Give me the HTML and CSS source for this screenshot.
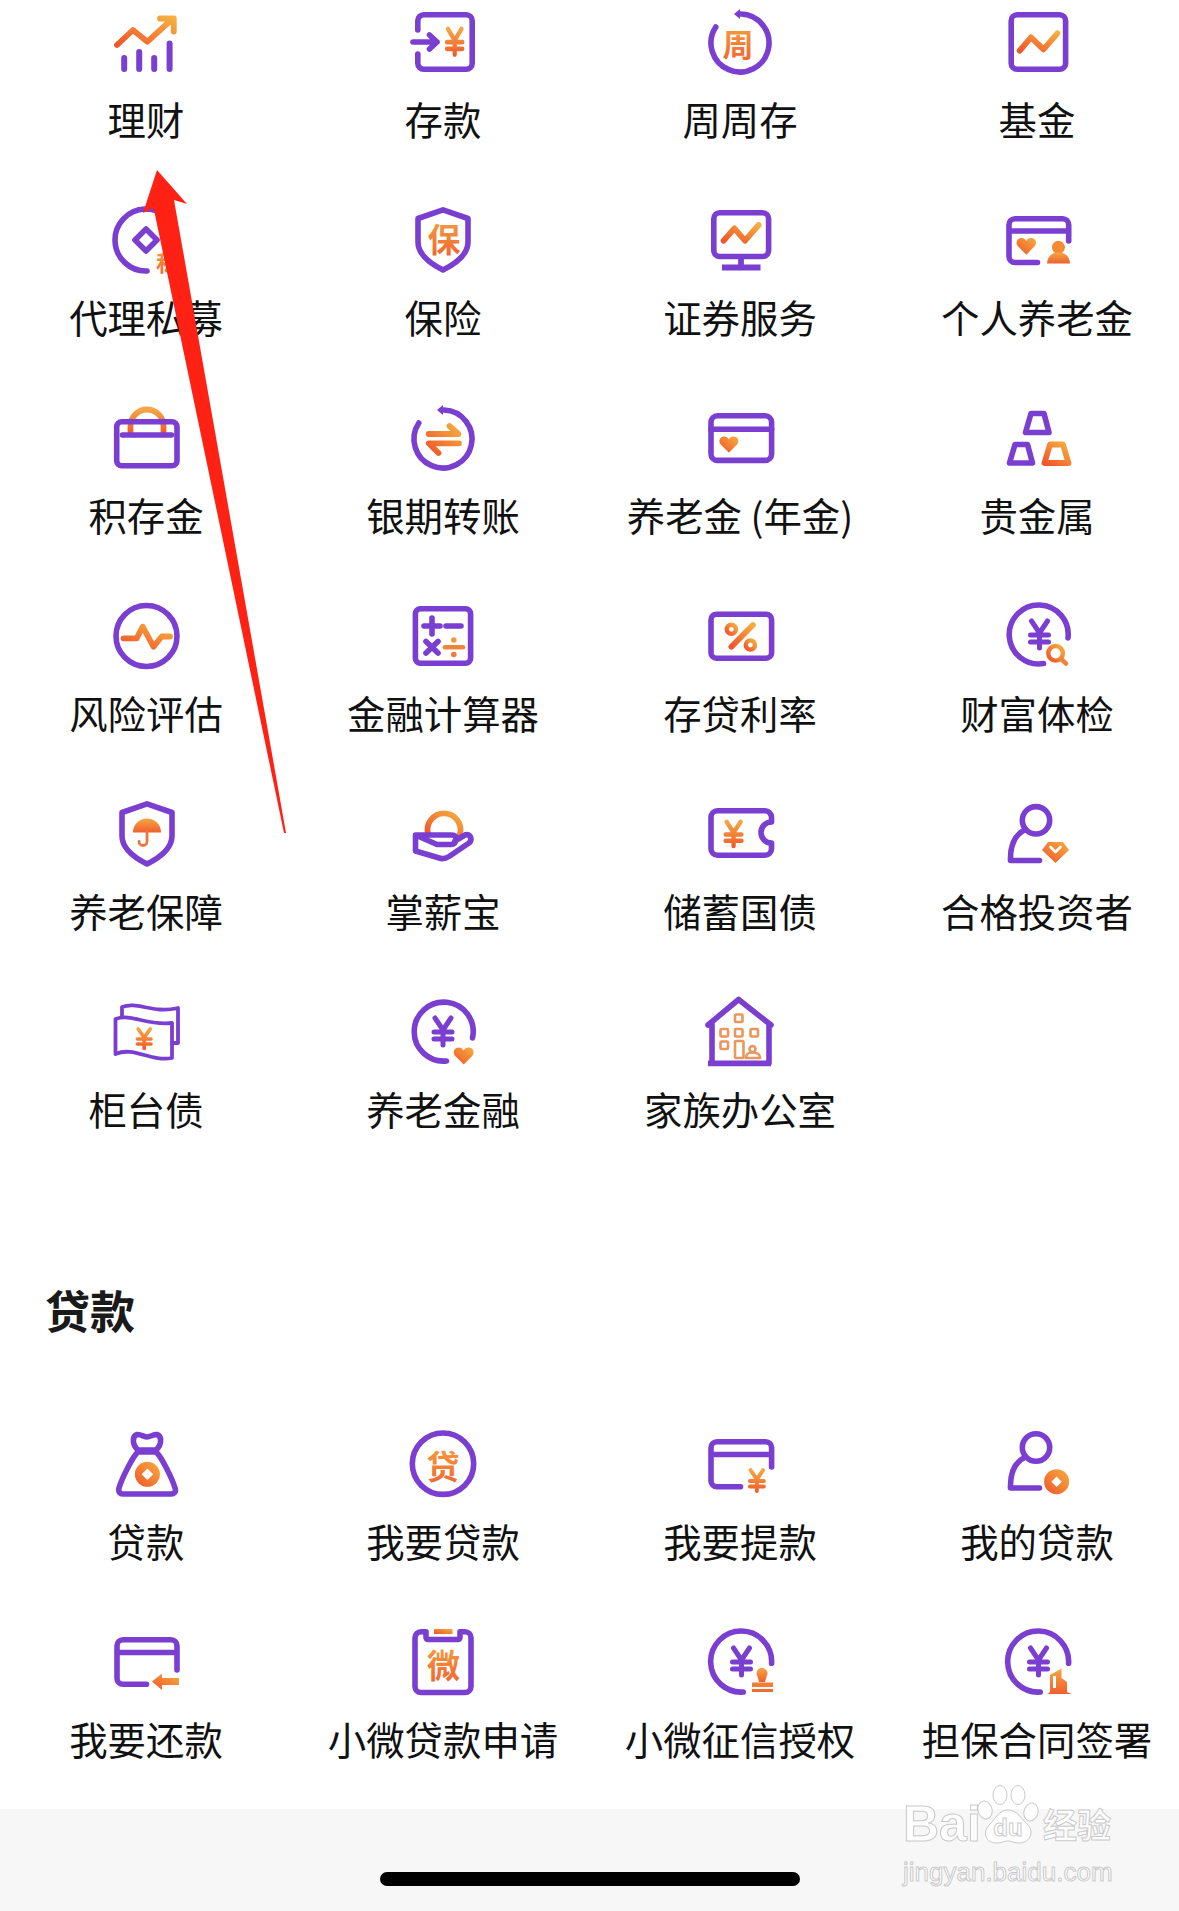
FILE: index.html
```html
<!DOCTYPE html>
<html lang="zh-CN">
<head>
<meta charset="utf-8">
<title>理财 贷款</title>
<link rel="stylesheet" href="styles.css">
</head>
<body>
<svg class="defs" aria-hidden="true">
  <defs>
    <linearGradient id="g" x1="1" y1="0" x2="0" y2="1">
      <stop offset="0" stop-color="#f6ae3f"/>
      <stop offset="1" stop-color="#f0552b"/>
    </linearGradient>
    <linearGradient id="t" x1="0" y1="0" x2="0" y2="1">
      <stop offset="0" stop-color="#f5a643"/>
      <stop offset="1" stop-color="#ef5f2e"/>
    </linearGradient>
    <path id="yen" d="M4 2 L12 14 L20 2 M3 16 H21 M3 23 H21 M12 14 V29"/>
    <path id="heart" d="M10 18 L1.5 9.5 C-1.5 6 .5 1 5 1 C7.5 1 9 2.2 10 4 C11 2.2 12.5 1 15 1 C19.5 1 21.5 6 18.5 9.5 Z"/>
  </defs>
</svg>
<main class="page">
  <section class="grid">
    <div class="cell"><svg class="icon" viewBox="0 0 72 72"><path class="p bars" d="M14.2 52V63M29.2 46V63M44.2 52V63M59.6 37.5V63"/><path class="o" stroke="url(#g)" d="M7 39L23 24L37.4 35.7L59 16M50 12.5H63.8V25.5"/></svg><span class="label">理财</span></div>
    <div class="cell"><svg class="icon" viewBox="0 0 72 72"><path class="p" d="M10.8 24V14.8a6 6 0 0 1 6-6H59.2a6 6 0 0 1 6 6V57.2a6 6 0 0 1-6 6H16.8a6 6 0 0 1-6-6V48"/><path class="p" d="M6 36H30M22.5 29L30 36L22.5 43"/><use href="#yen" class="o2" stroke="url(#t)" transform="translate(37.5 21) scale(.85 .95)"/></svg><span class="label">存款</span></div>
    <div class="cell"><svg class="icon" viewBox="0 0 72 72"><path class="p" d="M11.8 21A29 29 0 1 0 37 8"/><path class="pf" d="M36 3V13L30 8Z"/><text class="ch" x="34" y="50" font-size="31" fill="url(#t)">周</text></svg><span class="label">周周存</span></div>
    <div class="cell"><svg class="icon" viewBox="0 0 72 72"><rect class="p" x="10.2" y="8.8" width="54.4" height="54.4" rx="6"/><path class="o" stroke="url(#g)" d="M18.7 44.7L30 31.3L42.5 43.3L56.4 27.3"/></svg><span class="label">基金</span></div>

    <div class="cell"><svg class="icon" viewBox="0 0 72 72"><path class="p" d="M37 67A31 31 0 1 1 67 35"/><path class="p" d="M36 25L47 36L36 47L25 36Z"/><text class="ch" x="57" y="67" font-size="22" fill="url(#t)">私</text></svg><span class="label">代理私募</span></div>
    <div class="cell"><svg class="icon" viewBox="0 0 72 72"><path class="p" d="M36 5.8L61 14.5V38C61 51 48 60 36 66C24 60 11 51 11 38V14.5Z"/><text class="ch" x="37" y="48" font-size="33" fill="url(#t)">保</text></svg><span class="label">保险</span></div>
    <div class="cell"><svg class="icon" viewBox="0 0 72 72"><rect class="p" x="9.8" y="8.8" width="54.8" height="43.7" rx="6"/><path class="pb" d="M37 53V62M18 63.5H56.5"/><path class="o" stroke="url(#g)" d="M19.6 36.7L30.4 24.3L41 36.7L54.6 21"/></svg><span class="label">证券服务</span></div>
    <div class="cell"><svg class="icon" viewBox="0 0 72 72"><path class="p" d="M67.7 37V20.7a6 6 0 0 0-6-6H14a6 6 0 0 0-6 6V52.5a6 6 0 0 0 6 6H36.5M8 27H67.7"/><use href="#heart" fill="url(#g)" transform="translate(15.5 33) scale(.98)"/><circle cx="57.4" cy="43.3" r="6.5" fill="#f58a35"/><path d="M46 59.5C46.5 52 51 48.5 57.4 48.5C64 48.5 68.5 52 69 59.5Z" fill="url(#t)"/></svg><span class="label">个人养老金</span></div>

    <div class="cell"><svg class="icon" viewBox="0 0 72 72"><path class="o" stroke="url(#t)" d="M20.5 30V24A16.5 16.5 0 0 1 53.5 24V30"/><rect class="p" x="6.7" y="19.8" width="60.3" height="44" rx="5"/><path class="p" d="M12.5 33H61.5"/></svg><span class="label">积存金</span></div>
    <div class="cell"><svg class="icon" viewBox="0 0 72 72"><path class="p" d="M11.8 21A29 29 0 1 0 37 8"/><path class="pf" d="M36 3V13L30 8Z"/><path class="o" stroke="url(#g)" d="M21.7 32H51.4L42.5 24M52 41.3H21.7L31.5 51"/></svg><span class="label">银期转账</span></div>
    <div class="cell"><svg class="icon" viewBox="0 0 72 72"><rect class="p" x="7" y="13.8" width="60.6" height="44.6" rx="6.5"/><path class="p" d="M7 27.3H67.6"/><use href="#heart" fill="url(#g)" transform="translate(15.3 33.5) scale(.96 .96)"/></svg><span class="label">养老金 (年金)</span></div>
    <div class="cell"><svg class="icon" viewBox="0 0 72 72"><path class="p" d="M24.5 30.5H48L43 11.5H30ZM8.5 61H31.5L26.5 42.5H14Z"/><path class="o" stroke="url(#g)" d="M43.5 61H67.5L62 42.5H49Z"/></svg><span class="label">贵金属</span></div>

    <div class="cell"><svg class="icon" viewBox="0 0 72 72"><circle class="p" cx="36.5" cy="36" r="30.5"/><path class="o" stroke="url(#g)" d="M13.5 38.3H26.7L32.7 26.7L43.5 46.7L51.7 36.5H60"/></svg><span class="label">风险评估</span></div>
    <div class="cell"><svg class="icon" viewBox="0 0 72 72"><rect class="p" x="8.4" y="8.8" width="55.2" height="54.4" rx="5"/><path class="p" d="M25 18V34M17 26H33M39 26H54M19 41.5L31 53M31 41.5L19 53"/><path class="solid" d="M38 47.3H56"/><circle cx="46.8" cy="40" r="2.8" fill="#f4993d"/><circle cx="46.8" cy="54.5" r="2.8" fill="#f0783a"/></svg><span class="label">金融计算器</span></div>
    <div class="cell"><svg class="icon" viewBox="0 0 72 72"><rect class="p" x="7" y="14.2" width="60.6" height="44" rx="5.5"/><path class="o" stroke="url(#g)" d="M48.9 25L27.4 46.7"/><circle class="o3" stroke="url(#g)" cx="27.4" cy="29.3" r="4.6"/><circle class="o3" stroke="url(#g)" cx="46.4" cy="45" r="4.6"/></svg><span class="label">存贷利率</span></div>
    <div class="cell"><svg class="icon" viewBox="0 0 72 72"><path class="p" d="M42.5 63.6A29.5 29.5 0 1 1 67 38"/><use href="#yen" class="p2" transform="translate(26.5 19)"/><circle class="white" cx="54.6" cy="53.3" r="10"/><circle class="o3" stroke="url(#g)" cx="54.6" cy="53.3" r="7.3"/><path class="solid" d="M60 59L65 63.5"/></svg><span class="label">财富体检</span></div>

    <div class="cell"><svg class="icon" viewBox="0 0 72 72"><path class="p" d="M37 5.8L62 14.5V38C62 51 49 60 37 66C25 60 12 51 12 38V14.5Z"/><path d="M23 34.5A14 14 0 0 1 51 34.5Z" fill="url(#t)"/><path class="thin" d="M37 34V43.5A4 4 0 0 1 29 43.5"/></svg><span class="label">养老保障</span></div>
    <div class="cell"><svg class="icon" viewBox="0 0 72 72"><path class="o" stroke="url(#g)" d="M21 36A16.5 16.5 0 1 1 53 36"/><path class="p" d="M8.5 37V53L34 60.5Q38 61 42 58.5L62 45Q65.5 42 63 38Q60.5 35.5 57 37.5L48 43M30 46.5H44Q49 46 49 41Q49 37 45 37H8.5Z"/></svg><span class="label">掌薪宝</span></div>
    <div class="cell"><svg class="icon" viewBox="0 0 72 72"><path class="p" d="M13.5 12.8H61a6.5 6.5 0 0 1 6.5 6.5V24A10.5 10.5 0 0 0 67.5 45V50.7a6.5 6.5 0 0 1-6.5 6.5H13.5a6.5 6.5 0 0 1-6.5-6.5V19.3a6.5 6.5 0 0 1 6.5-6.5Z"/><use href="#yen" class="o2" stroke="url(#t)" transform="translate(19 22) scale(.88 .9)"/></svg><span class="label">储蓄国债</span></div>
    <div class="cell"><svg class="icon" viewBox="0 0 72 72"><circle class="p" cx="35" cy="22.3" r="13.7"/><path class="p" d="M24.5 31.5C15 36 9 46 9.5 62.5H38.5"/><path d="M47 44H62L68 52L54.5 65L41 52Z" fill="url(#g)"/><path class="chev" d="M49.5 49L54.5 54L59.5 49"/></svg><span class="label">合格投资者</span></div>

    <div class="cell"><svg class="icon" viewBox="0 0 72 72"><path class="p3" d="M5.5 23C22 17 36 30 62 27V62C40 66 24 50 5.5 58Z"/><path class="p3" d="M12 21V11C28 5 42 18 68 12V47H62"/><use href="#yen" class="o2" stroke="url(#t)" transform="translate(25.2 31.5) scale(.75 .72)"/></svg><span class="label">柜台债</span></div>
    <div class="cell"><svg class="icon" viewBox="0 0 72 72"><path class="p" d="M39.5 65A29.5 29.5 0 1 1 65.5 42"/><use href="#yen" class="p2" transform="translate(24 20)"/><use href="#heart" fill="url(#g)" transform="translate(46.7 50.5)"/></svg><span class="label">养老金融</span></div>
    <div class="cell"><svg class="icon" viewBox="0 0 72 72"><path class="p" d="M4 29L34.6 3.5L67 29M8 28V67M65 28V67"/><path class="pb" d="M4 67.3H67"/><g class="win"><rect x="31" y="18.5" width="7.5" height="7.5" rx="1"/><rect x="16.5" y="33" width="7.5" height="7.5" rx="1"/><rect x="31" y="33" width="7.5" height="7.5" rx="1"/><rect x="46.5" y="33" width="7.5" height="7.5" rx="1"/><rect x="16.5" y="45.5" width="7.5" height="7.5" rx="1"/><rect x="31" y="45" width="8.5" height="17" rx="1"/><circle cx="48.5" cy="53" r="3"/><path d="M42 62C42 57 45 56.5 48.5 56.5C52 56.5 56 57 56 62Z"/></g></svg><span class="label">家族办公室</span></div>
    <div class="cell cell-empty"></div>
  </section>

  <h2 class="title">贷款</h2>

  <section class="grid">
    <div class="cell"><svg class="icon" viewBox="0 0 72 72"><path class="p" d="M28 22C22 17 22 8 27 6.5C31 6 34 9 37 9C40 9 44 6 47 6.5C52 8 52 17 46 22Z"/><path class="p" d="M28 24H46C51 28 62 50 65 60C66.5 64 64 66 61 66H13C10 66 8 64 9 60C12 50 23 28 28 24Z"/><circle cx="37.4" cy="46.3" r="12.5" fill="url(#g)"/><path d="M37.4 40.5L43.2 46.3L37.4 52.1L31.6 46.3Z" fill="#fff"/></svg><span class="label">贷款</span></div>
    <div class="cell"><svg class="icon" viewBox="0 0 72 72"><circle class="p" cx="36" cy="35.7" r="30.7"/><text class="ch" x="36" y="51" font-size="33" fill="url(#t)">贷</text></svg><span class="label">我要贷款</span></div>
    <div class="cell"><svg class="icon" viewBox="0 0 72 72"><path class="p" d="M67.6 39V19.8a6 6 0 0 0-6-6H13a6 6 0 0 0-6 6V52.8a6 6 0 0 0 6 6H36.5M7 26.5H67.6"/><use href="#yen" class="o2" stroke="url(#t)" transform="translate(43.5 40.5) scale(.78 .78)"/></svg><span class="label">我要提款</span></div>
    <div class="cell"><svg class="icon" viewBox="0 0 72 72"><circle class="p" cx="35" cy="19.5" r="13.7"/><path class="p" d="M24.5 29C15 33.5 9 43.5 9.5 60H38.5"/><circle cx="55.6" cy="53.7" r="12.5" fill="url(#g)"/><path d="M55.6 48.5L60.8 53.7L55.6 58.9L50.4 53.7Z" fill="#fff"/></svg><span class="label">我的贷款</span></div>

    <div class="cell"><svg class="icon" viewBox="0 0 72 72"><path class="p" d="M67 44V19.8a6 6 0 0 0-6-6H13a6 6 0 0 0-6 6V52.3a6 6 0 0 0 6 6H36.5M7 26.5H67"/><path d="M42 55.5L52 47.5V52H69V59H52V64Z" fill="url(#g)"/></svg><span class="label">我要还款</span></div>
    <div class="cell"><svg class="icon" viewBox="0 0 72 72"><path class="p" d="M19 5.8H14a6 6 0 0 0-6 6V60.5a6 6 0 0 0 6 6H58a6 6 0 0 0 6-6V11.8a6 6 0 0 0-6-6H53V11.5a2 2 0 0 1-2 2H21a2 2 0 0 1-2-2Z"/><rect x="27" y="3" width="18.5" height="5" fill="url(#g)"/><text class="ch" x="36.5" y="52" font-size="33" fill="url(#t)">微</text></svg><span class="label">小微贷款申请</span></div>
    <div class="cell"><svg class="icon" viewBox="0 0 72 72"><path class="p" d="M39.2 66A30.5 30.5 0 1 1 67.6 37.3"/><use href="#yen" class="p2" transform="translate(25.5 20)"/><path d="M52.5 47A5.5 5.5 0 1 1 62.5 50.5L61 56H55L53.5 50.5Q52.5 49 52.5 47Z" fill="url(#t)"/><rect x="48" y="56.5" width="21" height="4.5" fill="#f37d34"/><rect x="48" y="63" width="21" height="3" fill="#f16a30"/></svg><span class="label">小微征信授权</span></div>
    <div class="cell"><svg class="icon" viewBox="0 0 72 72"><path class="p" d="M39.2 66A30.5 30.5 0 1 1 67.6 37.3"/><use href="#yen" class="p2" transform="translate(25.5 20)"/><path d="M46.5 68L49 66V49L60.5 42.5V52L66 56V66L70.5 68Z" fill="url(#t)"/><rect x="52" y="50" width="3" height="12" fill="#fff"/></svg><span class="label">担保合同签署</span></div>
  </section>

  <footer class="bar"><div class="home"></div></footer>

  <div class="wm">
    <div class="wm-row">
      <span class="wm-bai">Bai</span>
      <svg class="wm-paw" viewBox="0 0 62 60"><ellipse cx="8" cy="25" rx="7" ry="9" transform="rotate(-15 8 25)"/><ellipse cx="23" cy="10" rx="7" ry="9.5"/><ellipse cx="41" cy="10" rx="7" ry="9.5"/><ellipse cx="54" cy="27" rx="7" ry="9" transform="rotate(15 54 27)"/><path d="M31 25C41 25 44 34 51 40C58 48 52 58 42 58C36 58 35 56 31 56C27 56 25 58 19 58C9 58 5 48 12 40C19 34 21 25 31 25Z"/><text x="31" y="51" class="wm-du">du</text></svg>
      <span class="wm-cn">经验</span>
    </div>
    <div class="wm-url">jingyan.baidu.com</div>
  </div>

  <svg class="arrow" viewBox="0 0 320 840" aria-hidden="true"><polygon points="157,170 187,204 174,200 286,833 284,833 153.6,208 143,213" fill="#fe2114"/></svg>
</main>
</body>
</html>
```
FILE: styles.css
```css
* { box-sizing: border-box; }
html, body { margin: 0; padding: 0; background: #fff; }
.defs { position: absolute; width: 0; height: 0; }
.page {
  position: relative;
  width: 1179px;
  height: 1911px;
  overflow: hidden;
  padding-top: 6px;
  font-family: "Noto Sans CJK SC", "Noto Sans", sans-serif;
  color: #111;
}
.grid {
  display: grid;
  grid-template-columns: repeat(4, 260px);
  column-gap: 37px;
  row-gap: 54px;
  padding-left: 16px;
}
.cell {
  display: flex;
  flex-direction: column;
  align-items: center;
  height: 144px;
  gap: 16px;
}
.icon { width: 72px; height: 72px; overflow: visible; flex: none; }
.label {
  font-size: 38.4px;
  line-height: 48px;
  font-weight: 400;
  white-space: nowrap;
}
.title {
  margin: 140px 0 88px 45px;
  font-size: 45px;
  line-height: 60px;
  font-weight: 700;
  color: #1a1a1a;
}
.bar {
  margin-top: 39px;
  height: 102px;
  background: #f7f7f7;
  padding-top: 63px;
  display: flex;
  justify-content: center;
}
.home { width: 420px; height: 14px; border-radius: 7px; background: #000; }

.p, .p2, .p3, .pb, .o, .o2, .o3, .solid, .thin, .chev {
  fill: none;
  stroke-linecap: round;
  stroke-linejoin: round;
}
.p { stroke: #7a3fd1; stroke-width: 5.6; }
.bars { stroke-width: 6; }
.p2 { stroke: #7a3fd1; stroke-width: 5; }
.p3 { stroke: #7a3fd1; stroke-width: 3.8; }
.pb { stroke: #7a3fd1; stroke-width: 5.8; stroke-linecap: butt; }
.pf { fill: #7a3fd1; }
.o { stroke-width: 5.8; }
.o2 { stroke-width: 5; }
.o3 { stroke-width: 4.4; }
.solid { stroke: #f0853a; stroke-width: 4.6; }
.thin { stroke: #ee7440; stroke-width: 2.8; }
.chev { stroke: #fff; stroke-width: 2.6; }
.white { fill: #fff; }
.win { fill: none; stroke: #e9975c; stroke-width: 2.6; }
.ch {
  font-family: "Noto Sans CJK SC", sans-serif;
  font-weight: 700;
  text-anchor: middle;
}

.wm {
  position: absolute;
  left: 903px;
  top: 1785px;
  width: 214px;
}
.wm-row { display: flex; align-items: flex-end; height: 68px; }
.wm-bai, .wm-cn, .wm-url {
  color: rgba(255, 255, 255, .75);
  -webkit-text-stroke: 1px rgba(180, 180, 180, .7);
}
.wm-bai {
  font-family: "Liberation Sans", sans-serif;
  font-weight: 700;
  font-size: 50px;
  line-height: 58px;
  width: 74px;
}
.wm-paw { width: 62px; height: 60px; flex: none; margin-bottom: 8px; fill: rgba(255, 255, 255, .75); stroke: rgba(180, 180, 180, .7); stroke-width: 1; }
.wm-du {
  font-family: "Liberation Sans", sans-serif;
  font-size: 24px;
  font-weight: 700;
  text-anchor: middle;
  fill: rgba(255, 255, 255, .8);
}
.wm-cn {
  font-family: "Noto Sans CJK SC", sans-serif;
  font-weight: 700;
  font-size: 34px;
  line-height: 58px;
  margin-left: 4px;
  white-space: nowrap;
}
.wm-url {
  font-family: "Liberation Sans", sans-serif;
  font-size: 26px;
  line-height: 30px;
  white-space: nowrap;
  margin-top: 4px;
}
.arrow {
  position: absolute;
  left: 0;
  top: 0;
  width: 320px;
  height: 840px;
}
```
